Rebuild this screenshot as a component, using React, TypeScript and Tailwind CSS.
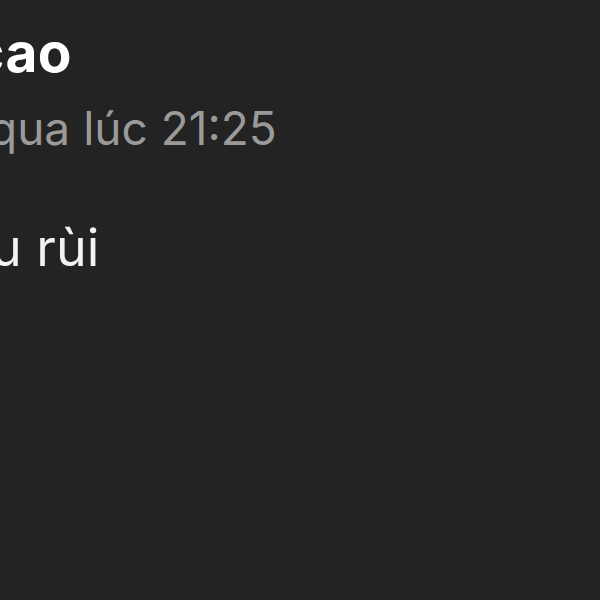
export default function App() {
  return (
    <div className="w-[600px] h-[600px] overflow-hidden bg-[#232323] font-['Inter',sans-serif]">
      <div className="pt-[21px] flex flex-col">
        {/* sender name, cut off on the left */}
        <div className="-ml-[28px] text-[55px] leading-[62px] font-bold tracking-[0.5px] text-white whitespace-nowrap">
          cao
        </div>
        {/* timestamp */}
        <div className="mt-[19px] -ml-[11px] text-[46px] leading-[52px] text-[#9a9a9a] whitespace-nowrap">
          qua lúc 21:25
        </div>
        {/* message body */}
        <div className="mt-[64px] -ml-[9px] text-[52px] leading-[60px] text-[#f2f2f2] whitespace-nowrap">
          u rùi
        </div>
      </div>
    </div>
  );
}
